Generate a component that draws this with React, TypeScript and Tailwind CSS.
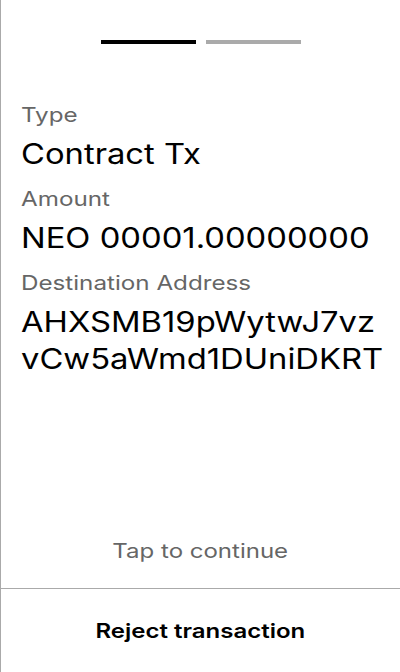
import React from 'react';

const fields = [
  { label: 'Type', lines: ['Contract Tx'] },
  { label: 'Amount', lines: ['NEO 00001.00000000'] },
  { label: 'Destination Address', lines: ['AHXSMB19pWytwJ7vz', 'vCw5aWmd1DUniDKRT'] },
];

export default function App() {
  return (
    <div
      className="h-[672px] w-[400px] bg-white border-l border-[#aaaaaa] flex flex-col text-black overflow-hidden"
      style={{ fontFamily: 'Inter, "Noto Sans", sans-serif' }}
    >
      <div className="flex-1 flex flex-col">
        <div className="flex justify-center gap-[10px] pt-[40px]">
          <div className="w-[95px] h-[4px] bg-black" />
          <div className="w-[95px] h-[4px] bg-[#aaaaaa]" />
        </div>

        <div className="px-[20px] pt-[57px] flex flex-col">
          {fields.map((f) => (
            <div key={f.label} className="flex flex-col items-start">
              <span className="text-[20px] leading-[28px] text-[#666666] origin-left scale-x-[1.21]">{f.label}</span>
              <div className="mt-[7px] mb-[12px] flex flex-col items-start">
                {f.lines.map((l) => (
                  <span key={l} className="text-[28px] leading-[37px] whitespace-nowrap origin-left scale-x-[1.17]">{l}</span>
                ))}
              </div>
            </div>
          ))}
        </div>

        <div className="mt-auto pb-[22px] flex justify-center">
          <span className="text-[20px] text-[#666666] scale-x-[1.2]">Tap to continue</span>
        </div>
      </div>

      <button className="h-[84px] border-t border-[#aaaaaa] flex items-center justify-center">
        <span className="text-[20px] font-semibold scale-x-[1.2]">Reject transaction</span>
      </button>
    </div>
  );
}
